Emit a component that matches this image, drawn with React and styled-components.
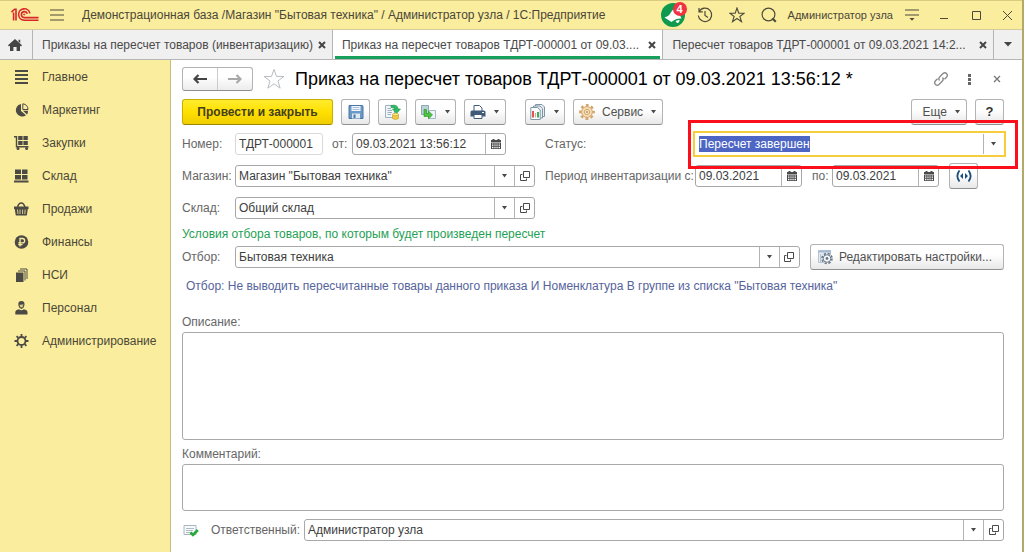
import React, { useEffect, useRef } from 'react'
import styled, { createGlobalStyle } from 'styled-components';

const GlobalStyle = createGlobalStyle`
  * {
    box-sizing: border-box;
  }

  body {
    margin: 0;
    background: #ffffff;
    color: #4a4a4a;
    font-family: "Liberation Sans", Arial, sans-serif;
    font-size: 12px;
    line-height: 16px;
  }

  button, input, textarea {
    font: inherit;
    color: inherit;
  }

  button {
    padding: 0;
    cursor: pointer;
  }
`

const Window = styled.div`
  min-height: 100vh;
  display: flex;
  flex-direction: column;
  border-right: 2px solid #b5a96a;
`

/* Title bar */

const TitleBar = styled.header`
  height: 30px;
  display: flex;
  align-items: center;
  padding-left: 11px;
  background: #fbed9e;
  border-top: 1px solid #d9cb80;
  border-bottom: 1px solid #d5cb9a;
`

const AppTitle = styled.div`
  flex: 1;
  min-width: 0;
  margin-left: 7px;
  color: #4a4738;
  white-space: nowrap;
  overflow: hidden;
`

const IconButton = styled.button`
  display: flex;
  align-items: center;
  align-self: center;
  justify-content: center;
  width: ${props => props.$width || 32}px;
  height: 24px;
  flex: none;
  border: 0;
  background: none;
  color: ${props => props.$color || "#4d4b3c"};
`

const Bell = styled(IconButton)`
  position: relative;
`

const Badge = styled.span`
  position: absolute;
  top: -1px;
  right: 2px;
  width: 14px;
  height: 14px;
  border-radius: 50%;
  background: #ef3340;
  color: #ffffff;
  font-size: 11px;
  font-weight: bold;
  line-height: 14px;
  text-align: center;
`

const UserName = styled.button`
  flex: none;
  margin: 0 3px;
  border: 0;
  background: none;
  color: #4a4738;
  font-size: 11px;
`

/* Tabs of the open windows */

const TabBar = styled.nav`
  height: 30px;
  display: flex;
  background: #f0f0f0;
  border-bottom: 1px solid #b5b5b5;
`

const TabItem = styled.div`
  display: flex;
  flex: ${props => props.$grow ? "1 1 0" : "0 0 auto"};
  min-width: 0;
  align-items: center;
  justify-content: space-between;
  padding: 0 1px 0 9px;
  border-right: 1px solid #b5b5b5;
  background: ${props => props.$active ? "#ffffff" : "#f0f0f0"};
  box-shadow: ${props => props.$active ? "inset 2px 0 #ffffff, inset -2px 0 #ffffff, inset 0 -3px #16a05c" : "none"};
`

const TabLink = styled.a`
  min-width: 0;
  overflow: hidden;
  color: #4a4a4a;
  text-decoration: none;
  white-space: nowrap;
`

const HomeTab = styled.a`
  width: 33px;
  flex: none;
  display: flex;
  align-items: center;
  justify-content: center;
  padding-right: 3px;
  border-right: 1px solid #b5b5b5;
  color: #454545;
`

/* Sections panel */

const Body = styled.div`
  flex: 1;
  display: flex;
`

const Sidebar = styled.nav`
  width: 171px;
  flex: none;
  background: #fbed9e;
  border-right: 1px solid #c9bd7c;
`

const SectionLink = styled.a`
  height: 33px;
  display: flex;
  align-items: center;
  gap: 13px;
  padding-left: 14px;
  color: #4a4738;
  text-decoration: none;

  svg {
    flex: none;
  }
`

/* Document form */

const Form = styled.form`
  flex: 1;
  min-width: 0;
  display: flex;
  flex-direction: column;
  padding: 7px 18px 10px 11px;
`

const FormHeader = styled.div`
  height: 24px;
  display: flex;
  align-items: center;
  margin-right: -7px;
`

const History = styled.div`
  display: flex;
  height: 24px;
  width: 71px;
  border: 1px solid #b3b3b3;
  border-bottom-color: #8f8f8f;
  border-radius: 3px;
  background: linear-gradient(#ffffff 40%, #ececec);

  button {
    flex: 1;
    display: flex;
    align-items: center;
    justify-content: center;
    border: 0;
    background: none;
  }

  button + button {
    border-left: 1px solid #cccccc;
  }
`

const FormTitle = styled.h1`
  flex: 1;
  min-width: 0;
  margin: 0;
  color: #000000;
  font-size: 18px;
  font-weight: normal;
  line-height: 24px;
  white-space: nowrap;
`

const Toolbar = styled.div`
  display: flex;
  gap: 8px;
  margin: 8px 0;
`

const ToolButton = styled.button`
  height: 26px;
  min-width: 29px;
  display: flex;
  flex: none;
  align-items: center;
  justify-content: center;
  gap: 7px;
  padding: 0 ${props => props.$pad || 0}px;
  border: 1px solid #b3b3b3;
  border-bottom-color: #8f8f8f;
  border-radius: 3px;
  background: linear-gradient(#ffffff 40%, #e8e8e8);
  color: #505050;
  white-space: nowrap;
`

const PrimaryButton = styled(ToolButton)`
  width: 151px;
  border-color: #c9ad00;
  border-bottom-color: #9c8600;
  background: linear-gradient(#ffec2e, #ffe000 50%, #efcd00);
  color: #463f1c;
  font-weight: bold;
`

const MoreButton = styled(ToolButton)`
  padding: 0 5px 0 11px;
`

const SettingsButton = styled(ToolButton)`
  padding: 0 11px 0 6px;
  gap: 6px;
`

const HelpButton = styled(ToolButton)`
  color: #333333;
  font-size: 13px;
  font-weight: bold;
`

const Spacer = styled.div`
  flex: ${props => props.$size ? `0 0 ${props.$size}px` : "1"};
`

const Fields = styled.div`
  display: grid;
  grid-template-columns: 353px 1fr;
  gap: 10px;
`

const Row = styled.div`
  height: 22px;
  display: flex;
  align-items: center;
`

const Label = styled.label`
  width: ${props => props.$width ? `${props.$width}px` : "auto"};
  flex: none;
  color: #666666;
  white-space: nowrap;
`

const FieldBox = styled.div`
  width: ${props => props.$width ? `${props.$width}px` : "auto"};
  flex: ${props => props.$width ? "none" : "1"};
  min-width: 0;
  height: 22px;
  display: flex;
  border: 1px solid ${props => props.$muted ? "#d9d9d9" : "#a8a8a8"};
  border-radius: 3px;
  background: #ffffff;

  input {
    flex: 1;
    width: 0;
    min-width: 0;
    padding: 0 3px;
    border: 0;
    outline: 0;
    background: none;
    color: #3d3d3d;
  }

  input::selection {
    background: #4d66c4;
    color: #ffffff;
  }

  button {
    width: 20px;
    display: flex;
    flex: none;
    align-items: center;
    justify-content: center;
    border: 0;
    border-left: 1px solid #b3b3b3;
    background: none;
    color: #4a4a4a;
  }

  ${props => props.$focused && `
    border-color: #ffffff;
    border-radius: 0;
    outline: 2px solid #f8cd3c;
  `}
`

const StatusFrame = styled.div`
  position: relative;
  display: flex;
  flex: 1;

  &::after {
    content: "";
    position: absolute;
    inset: -13px -14px -14px -7px;
    border: 3px solid #fb0f1c;
    pointer-events: none;
  }
`

const Note = styled.p`
  margin: 7px 0 4px;
  color: #1fa055;
`

const FilterLink = styled.a`
  margin: 10px 0 20px 4px;
  color: #56649c;
  text-decoration: none;
`

const TextArea = styled.textarea`
  display: block;
  width: 100%;
  height: ${props => props.$height}px;
  margin: 2px 0 ${props => props.$gap}px;
  padding: 3px;
  border: 1px solid #a8a8a8;
  border-radius: 3px;
  resize: none;
`

const CommentMark = styled.span`
  width: 29px;
  flex: none;
  padding-left: 1px;

  svg {
    display: block;
  }
`

/* Icons */

const Svg = ({ w = 16, h = w, children, ...rest }) => (
  <svg width={w} height={h} viewBox={`0 0 ${w} ${h}`} fill="none" stroke="currentColor" aria-hidden="true" {...rest}>
    {children}
  </svg>
)

const Logo = () => (
  <Svg w={28} h={16} stroke="#d9262c" strokeWidth="1.6">
    <path d="M0.5 5.2 3.6 2.2H5V13.6M2.6 5.6V13.6" />
    <path d="M18.9 6.4A5.7 5.7 0 1 0 13.2 13.2H27.5" />
    <path d="M16.3 6.8A3 3 0 1 0 13.2 10.6H27.5" />
    <circle cx="13.2" cy="7.5" r="0.6" strokeWidth="1" />
  </Svg>
)

const Caret = () => (
  <Svg w={7} h={4} stroke="none" fill="#4a4a4a"><path d="M1 0H6L3.5 3.5Z" /></Svg>
)

const Cross = ({ size = 9, width = 2 }) => (
  <Svg w={size} strokeWidth={width}><path d={`M1 1 ${size - 1} ${size - 1}M${size - 1} 1 1 ${size - 1}`} /></Svg>
)

const Star = ({ size, color, width = 1 }) => (
  <svg width={size} height={size} viewBox="0 0 24 24" fill="none" stroke={color} strokeWidth={width} aria-hidden="true">
    <path d="M12 1.5 14.7 9.2 22.8 9.3 16.3 14.2 18.7 22 12 17.3 5.3 22 7.7 14.2 1.2 9.3 9.3 9.2Z" />
  </svg>
)

const Arrow = ({ color, flip }) => (
  <Svg w={14} h={10} stroke={color} strokeWidth="2.2">
    <path d={flip ? "M0 5H12M8.5 1 12.5 5 8.5 9" : "M14 5H2M5.5 1 1.5 5 5.5 9"} />
  </Svg>
)

const Calendar = () => (
  <Svg w={10} h={10} stroke="none" fill="#4a4a4a">
    <path d="M0 1H1.5V0H3.5V1H6.5V0H8.5V1H10V3H0Z" />
    <path fillRule="evenodd" d="M0 3.5H10V10H0ZM1 4.4V5.4H2.4V4.4ZM3.3 4.4V5.4H4.6V4.4ZM5.4 4.4V5.4H6.7V4.4ZM7.6 4.4V5.4H9V4.4ZM1 6.2V7.3H2.4V6.2ZM3.3 6.2V7.3H4.6V6.2ZM5.4 6.2V7.3H6.7V6.2ZM7.6 6.2V7.3H9V6.2ZM1 8.1V9.2H2.4V8.1ZM3.3 8.1V9.2H4.6V8.1ZM5.4 8.1V9.2H6.7V8.1ZM7.6 8.1V9.2H9V8.1Z" />
  </Svg>
)

const OpenIcon = () => (
  <Svg w={10} h={10} strokeWidth="1">
    <path d="M3.5 .5H9.5V6.5H3.5ZM2.5 3.5H.5V9.5H6.5V7.5" />
  </Svg>
)

const SaveIcon = () => (
  <Svg w={16} stroke="#4a76a5">
    <path d="M1 1.5H14Q15 1.5 15 2.5V14.5H1Z" fill="#6c98c6" />
    <path d="M3.5 2H12.5V7H3.5Z" fill="#f4f8fc" stroke="none" />
    <path d="M4.5 3.5H11.5M4.5 5.5H11.5" stroke="#a9bfd6" />
    <path d="M4 9.5H12V14.5H4Z" fill="#dfe9f2" stroke="none" />
    <path d="M5.5 10.5H7.5V14H5.5Z" fill="#4a76a5" stroke="none" />
  </Svg>
)

const PostIcon = () => (
  <Svg w={17} h={16}>
    <path d="M1.5 1.5H10.5V13.5H1.5Z" fill="#f3f6f9" stroke="#9eb0c2" />
    <path d="M3.5 4.5H7M3.5 6.5H8M3.5 8.5H8M3.5 10.5H7" stroke="#9eb0c2" />
    <path d="M7 1.5Q14 0 14 5H16.5L12.5 9.5 8.5 5H11Q11 3 7 3.5Z" fill="#2fbb63" stroke="#189949" strokeWidth=".6" />
    <path d="M8.5 10.5V14.5Q11.5 16.8 14.5 14.5V10.5" fill="#f0cb45" stroke="#c79e24" strokeWidth=".6" />
    <ellipse cx="11.5" cy="10.5" rx="3" ry="1.2" fill="#fce88c" stroke="#c79e24" strokeWidth=".6" />
  </Svg>
)

const CreateIcon = () => (
  <Svg w={17} h={16}>
    <path d="M1.5 1.5H8.5V10.5H1.5Z" fill="#b9d3d6" stroke="#8fa9b5" />
    <path d="M8.5 6.5H15.5V14.5H8.5Z" fill="#eef3f6" stroke="#a3b7c4" />
    <path d="M4 5.5H6.5V9.5H8.5V7L12.5 11 8.5 14.8V12.5H4Z" fill="#4fc23f" stroke="#249327" strokeWidth=".6" />
  </Svg>
)

const PrintIcon = () => (
  <Svg w={16} stroke="none">
    <path d="M4 1.5H9.5L12 4V8H4Z" fill="#ffffff" stroke="#3f5b78" />
    <path d="M2 6.5H14Q15.5 6.5 15.5 8V12.5H.5V8Q.5 6.5 2 6.5Z" fill="#3f5b78" />
    <path d="M4 10.5H12V14.5H4Z" fill="#ffffff" stroke="#3f5b78" />
    <path d="M12 8.5H14" stroke="#ffffff" />
  </Svg>
)

const ReportIcon = () => (
  <Svg w={16}>
    <path d="M5.5 .5H12L14.5 3V12.5H5.5Z" fill="#e9eef2" stroke="#7f96a8" />
    <path d="M3.5 2H10L12.5 4.5V14H3.5Z" fill="#e9eef2" stroke="#7f96a8" />
    <path d="M.8 3.5H7.5L10.2 6V15.5H.8Z" fill="#ffffff" stroke="#7f96a8" />
    <path d="M3 7V13.5" stroke="#e2574c" strokeWidth="2" />
    <path d="M5.5 9V13.5" stroke="#f0a08f" />
    <path d="M8 8V13.5" stroke="#3fae5a" strokeWidth="2" />
  </Svg>
)

const Gear = () => (
  <Svg w={16}>
    <circle cx="8" cy="8" r="6.7" stroke="#d3a468" strokeWidth="2.4" strokeDasharray="2.8 2.46" strokeDashoffset="1.4" />
    <circle cx="8" cy="8" r="5.4" fill="#f6dcb4" stroke="#d3a468" />
    <circle cx="8" cy="8" r="2.6" fill="#fbeed8" stroke="#d3a468" />
    <circle cx="8" cy="8" r="1" fill="#b98a50" stroke="none" />
  </Svg>
)

const SettingsIcon = () => (
  <Svg w={16} h={16}>
    <path d="M1.5 1.5H13.5V13.5H1.5Z" fill="#e4ebf2" stroke="#b5c4d3" />
    <path d="M1 2.5H14" stroke="#a5bbd1" strokeWidth="2" />
    <path d="M3.5 5V13" stroke="#b5c4d3" />
    <circle cx="10" cy="9.5" r="5" fill="#ffffff" stroke="#687887" strokeWidth="1.6" strokeDasharray="2.3 1.63" />
    <circle cx="10" cy="9.5" r="3.8" fill="#f5f7f9" stroke="#687887" />
    <circle cx="10" cy="9.5" r="1.4" fill="#687887" stroke="none" />
  </Svg>
)

const RangeIcon = () => (
  <Svg w={16} h={12} stroke="#1c4f7c" strokeWidth="1.8">
    <path d="M3.5 .5Q-.8 6 3.5 11.5M12.5 .5Q16.8 6 12.5 11.5" />
    <path d="M7 3V9L4 6ZM9 3V9L12 6Z" fill="#1c4f7c" stroke="none" />
  </Svg>
)

const CommentIcon = () => (
  <Svg w={16} h={13}>
    <path d="M1 1.5H13V10.5H1Z" fill="#f7f9fa" stroke="#a9b6c2" />
    <path d="M3 4.5H11M3 6.5H10M3 8.5H8" stroke="#b0bcc7" />
    <path d="M7.5 8.5 10 11 14.8 6" stroke="#22ab38" strokeWidth="2.6" />
  </Svg>
)

const sections = [
  {
    title: "Главное",
    icon: <path d="M1 2H14M1 6H14M1 10H14M1 14H14" strokeWidth="2" />
  },
  {
    title: "Маркетинг",
    icon: <g stroke="none" fill="currentColor">
      <path d="M7 2V9L12 13.2A6.3 6.3 0 1 1 7 2Z" />
      <path d="M8.8 1.8A6 6 0 0 1 14 7.5L8.8 7.5Z" fill="none" stroke="currentColor" />
      <path d="M9 8.8H14Q14 11 13 12.4Z" />
    </g>
  },
  {
    title: "Закупки",
    icon: <g stroke="none" fill="currentColor">
      <path d="M0 1H3.2V11H14.5V12.6H1.8V2.4H0Z" />
      <path d="M4.2 1H8.6V5H4.2ZM9.4 1H13.8V5H9.4ZM4.2 6H8.6V10H4.2ZM9.4 6H13.8V10H9.4Z" />
      <circle cx="4" cy="13.6" r="1.5" /><circle cx="12.6" cy="13.6" r="1.5" />
    </g>
  },
  {
    title: "Склад",
    icon: <path stroke="none" fill="currentColor" d="M1 1.5H7V6H1ZM8 1.5H13.5V6H8ZM1 7H7V11.5H1ZM8 7H13.5V11.5H8ZM0 12.5H14.5V14.5H0Z" />
  },
  {
    title: "Продажи",
    icon: <g>
      <path d="M3.5 6.5Q4.5 2 7.2 2T11 6.5" strokeWidth="1.4" />
      <path d="M0 5.5H14.5V8H13.8L12.8 14.5H1.8L.7 8H0Z" fill="currentColor" stroke="none" />
      <path d="M3.5 8.5 4 13M6 8.5V13M8.6 8.5V13M11.2 8.5 10.8 13" stroke="#fbed9e" strokeWidth=".8" />
    </g>
  },
  {
    title: "Финансы",
    icon: <g>
      <circle cx="7.5" cy="8" r="6.8" fill="currentColor" stroke="none" />
      <path d="M6 12.5V4.5H8.5A2.1 2.1 0 0 1 8.5 8.8H4.3M4.3 10.7H8.5" stroke="#fbed9e" strokeWidth="1.3" />
    </g>
  },
  {
    title: "НСИ",
    icon: <g>
      <path d="M2 5.5H9.5V15H2Z" fill="currentColor" stroke="none" />
      <path d="M4 4H11V13.5M6 2H13V12" strokeWidth="1" />
    </g>
  },
  {
    title: "Персонал",
    icon: <g fill="currentColor" stroke="none">
      <path d="M4.3 4Q4.3 1 7.4 1T10.5 4Q10.5 8 7.4 9 4.3 8 4.3 4Z" />
      <path d="M1.3 14.5V12Q1.3 10 5 9.2 7.4 11.5 9.8 9.2 13.5 10 13.5 12V14.5Z" />
      <path d="M5.4 4.5Q7.5 5 9.4 4.2 9.3 7 7.4 7.6 5.6 7 5.4 4.5Z" fill="#d8cb85" />
    </g>
  },
  {
    title: "Администрирование",
    icon: <g>
      <circle cx="7.5" cy="8" r="4" strokeWidth="1.8" />
      <path d="M7.5 1V3.5M7.5 12.5V15M.5 8H3M12 8H14.5M2.6 3.1 4.3 4.8M10.7 11.2 12.4 12.9M12.4 3.1 10.7 4.8M4.3 11.2 2.6 12.9" strokeWidth="1.8" />
    </g>
  }
]

const Combo = ({ id, label, value, width, focused, inputRef, open = true }) => (
  <FieldBox $width={width} $focused={focused}>
    <input id={id} ref={inputRef} defaultValue={value} />
    <button type="button" aria-label={`${label}: выбрать`}><Caret /></button>
    {open && <button type="button" aria-label={`${label}: открыть`}><OpenIcon /></button>}
  </FieldBox>
)

const DateField = ({ id, label, value, width }) => (
  <FieldBox $width={width}>
    <input id={id} defaultValue={value} />
    <button type="button" aria-label={`${label}: календарь`}><Calendar /></button>
  </FieldBox>
)

const Tab = ({ title, active, grow }) => (
  <TabItem $active={active} $grow={grow}>
    <TabLink href="#" aria-current={active ? "page" : undefined}>{title}</TabLink>
    <IconButton type="button" $width={18} $color="#454545" aria-label="Закрыть вкладку"><Cross size={8} /></IconButton>
  </TabItem>
)

const Header = () => (
  <TitleBar>
    <Logo />
    <IconButton $width={36} aria-label="Меню">
      <Svg w={14} h={12} strokeWidth="1.2"><path d="M0 1H14M0 6H14M0 11H14" /></Svg>
    </IconButton>
    <AppTitle>Демонстрационная база /Магазин "Бытовая техника" / Администратор узла / 1С:Предприятие</AppTitle>
    <Bell aria-label="Оповещения">
      <Svg w={24} stroke="none">
        <circle cx="12" cy="12" r="12" fill="#0f9a4e" />
        <path d="M3.5 14.5Q8 13 9.5 10 11.5 6 15.5 5L20.5 15.5Q16 15 12.5 17.5L10.5 19Z" fill="#ffffff" />
        <path d="M14.5 18 18.5 16.8Q18.5 20 16 20Z" fill="#ffffff" />
      </Svg>
      <Badge>4</Badge>
    </Bell>
    <IconButton aria-label="История">
      <Svg w={16} strokeWidth="1.2">
        <path d="M2.2 4.4A6.7 6.7 0 1 1 1.3 8.5M2 1V4.8H5.8M8 4V8.5L11 10.5" />
      </Svg>
    </IconButton>
    <IconButton aria-label="Избранное"><Star size={16} color="#4d4b3c" width={1.7} /></IconButton>
    <IconButton aria-label="Поиск">
      <Svg w={16} strokeWidth="1.2">
        <circle cx="7.5" cy="7.5" r="6.4" /><path d="M11.3 11.3 14.8 14.8" strokeWidth="2.2" />
      </Svg>
    </IconButton>
    <UserName>Администратор узла</UserName>
    <IconButton aria-label="Настройки окна">
      <Svg w={14} h={14} strokeWidth="1.2">
        <path d="M0 2H14M0 7H14" /><path d="M4.5 10H9.5L7 12.8Z" fill="currentColor" stroke="none" />
      </Svg>
    </IconButton>
    <IconButton aria-label="Свернуть"><Svg w={10}><path d="M1 8.5H9" /></Svg></IconButton>
    <IconButton aria-label="Развернуть"><Svg w={9}><path d="M.5 .5H8.5V8.5H.5Z" /></Svg></IconButton>
    <IconButton $width={30} aria-label="Закрыть"><Cross size={11} width={1} /></IconButton>
  </TitleBar>
)

const App = () => {
  const status = useRef(null)

  useEffect(() => {
    status.current.focus()
    status.current.select()
  }, [])

  return (
    <Window>
      <GlobalStyle />
      <Header />

      <TabBar>
        <HomeTab href="#" aria-label="Начальная страница">
          <Svg w={14} h={12} stroke="none" fill="currentColor">
            <path d="M7 0 14 6.3 13 7.5 12 6.7V12H8.6V8H5.4V12H2V6.7L1 7.5 0 6.3ZM10.5 .8H12.2V4L10.5 2.5Z" />
          </Svg>
        </HomeTab>
        <Tab title="Приказы на пересчет товаров (инвентаризацию)" />
        <Tab title="Приказ на пересчет товаров ТДРТ-000001 от 09.03...." active grow />
        <Tab title="Пересчет товаров ТДРТ-000001 от 09.03.2021 14:2..." grow />
        <IconButton $width={28} aria-label="Все вкладки">
          <Svg w={8} h={5} stroke="none" fill="#454545"><path d="M0 0H8L4 4.5Z" /></Svg>
        </IconButton>
      </TabBar>

      <Body>
        <Sidebar>
          {sections.map(({ title, icon }) => (
            <SectionLink href="#" key={title}>
              <Svg w={15} h={16} color="#4b4a45">{icon}</Svg>
              {title}
            </SectionLink>
          ))}
        </Sidebar>

        <Form onSubmit={e => e.preventDefault()}>
          <FormHeader>
            <History>
              <button type="button" aria-label="Назад"><Arrow color="#444444" /></button>
              <button type="button" aria-label="Вперед"><Arrow color="#a8a8a8" flip /></button>
            </History>
            <IconButton type="button" $width={42} aria-label="В избранное"><Star size={22} color="#b0b6bb" /></IconButton>
            <FormTitle>Приказ на пересчет товаров ТДРТ-000001 от 09.03.2021 13:56:12 *</FormTitle>
            <IconButton type="button" $width={28} $color="#8a8a8a" aria-label="Ссылка">
              <Svg w={16} strokeWidth="1.4">
                <path d="M6.5 9.5Q5 7.5 6.8 5.8L10 2.6Q11.8 1 13.6 2.6 15.2 4.4 13.5 6.2L11.5 8.2M9.5 6.5Q11 8.5 9.2 10.2L6 13.4Q4.2 15 2.4 13.4 .8 11.6 2.5 9.8L4.5 7.8" />
              </Svg>
            </IconButton>
            <IconButton type="button" $width={28} $color="#666666" aria-label="Действия">
              <Svg w={3} h={11} stroke="none" fill="currentColor"><path d="M0 0H3V3H0ZM0 4H3V7H0ZM0 8H3V11H0Z" /></Svg>
            </IconButton>
            <IconButton type="button" $width={28} $color="#777777" aria-label="Закрыть"><Cross size={8} width={1.3} /></IconButton>
          </FormHeader>

          <Toolbar>
            <PrimaryButton type="submit">Провести и закрыть</PrimaryButton>
            <ToolButton type="button" aria-label="Записать"><SaveIcon /></ToolButton>
            <ToolButton type="button" aria-label="Провести"><PostIcon /></ToolButton>
            <ToolButton type="button" $pad={4} aria-label="Создать на основании"><CreateIcon /><Caret /></ToolButton>
            <ToolButton type="button" $pad={5} aria-label="Печать"><PrintIcon /><Caret /></ToolButton>
            <Spacer $size={3} />
            <ToolButton type="button" $pad={4} aria-label="Отчеты"><ReportIcon /><Caret /></ToolButton>
            <ToolButton type="button" $pad={5}><Gear />Сервис<Caret /></ToolButton>
            <Spacer />
            <MoreButton type="button">Еще<Caret /></MoreButton>
            <HelpButton type="button" aria-label="Справка">?</HelpButton>
          </Toolbar>

          <Fields>
            <Row>
              <Label $width={53} htmlFor="number">Номер:</Label>
              <FieldBox $width={88} $muted>
                <input id="number" defaultValue="ТДРТ-000001" readOnly />
              </FieldBox>
              <Spacer $size={9} />
              <Label $width={20} htmlFor="date">от:</Label>
              <DateField id="date" label="от" value="09.03.2021 13:56:12" width={154} />
            </Row>
            <Row>
              <Label $width={150} htmlFor="status">Статус:</Label>
              <StatusFrame>
                <Combo id="status" label="Статус" value="Пересчет завершен" focused inputRef={status} open={false} />
              </StatusFrame>
            </Row>

            <Row>
              <Label $width={53} htmlFor="shop">Магазин:</Label>
              <Combo id="shop" label="Магазин" value={'Магазин "Бытовая техника"'} />
            </Row>
            <Row>
              <Label $width={150} htmlFor="from">Период инвентаризации с:</Label>
              <DateField id="from" label="Период с" value="09.03.2021" width={107} />
              <Spacer $size={10} />
              <Label $width={20} htmlFor="to">по:</Label>
              <DateField id="to" label="Период по" value="09.03.2021" width={107} />
              <Spacer $size={10} />
              <ToolButton type="button" aria-label="Выбрать период"><RangeIcon /></ToolButton>
            </Row>

            <Row>
              <Label $width={53} htmlFor="store">Склад:</Label>
              <Combo id="store" label="Склад" value="Общий склад" />
            </Row>
          </Fields>

          <Note>Условия отбора товаров, по которым будет произведен пересчет</Note>

          <Row>
            <Label $width={53} htmlFor="filter">Отбор:</Label>
            <Combo id="filter" label="Отбор" value="Бытовая техника" />
            <Spacer $size={10} />
            <SettingsButton type="button"><SettingsIcon />Редактировать настройки...</SettingsButton>
          </Row>

          <FilterLink href="#">Отбор: Не выводить пересчитанные товары данного приказа И Номенклатура В группе из списка "Бытовая техника"</FilterLink>

          <Label htmlFor="description">Описание:</Label>
          <TextArea id="description" $height={108} $gap={6} />

          <Label htmlFor="comment">Комментарий:</Label>
          <TextArea id="comment" $height={47} $gap={8} />

          <Row>
            <CommentMark><CommentIcon /></CommentMark>
            <Label $width={93} htmlFor="owner">Ответственный:</Label>
            <Combo id="owner" label="Ответственный" value="Администратор узла" />
          </Row>
        </Form>
      </Body>
    </Window>
  )
}

export default App;
